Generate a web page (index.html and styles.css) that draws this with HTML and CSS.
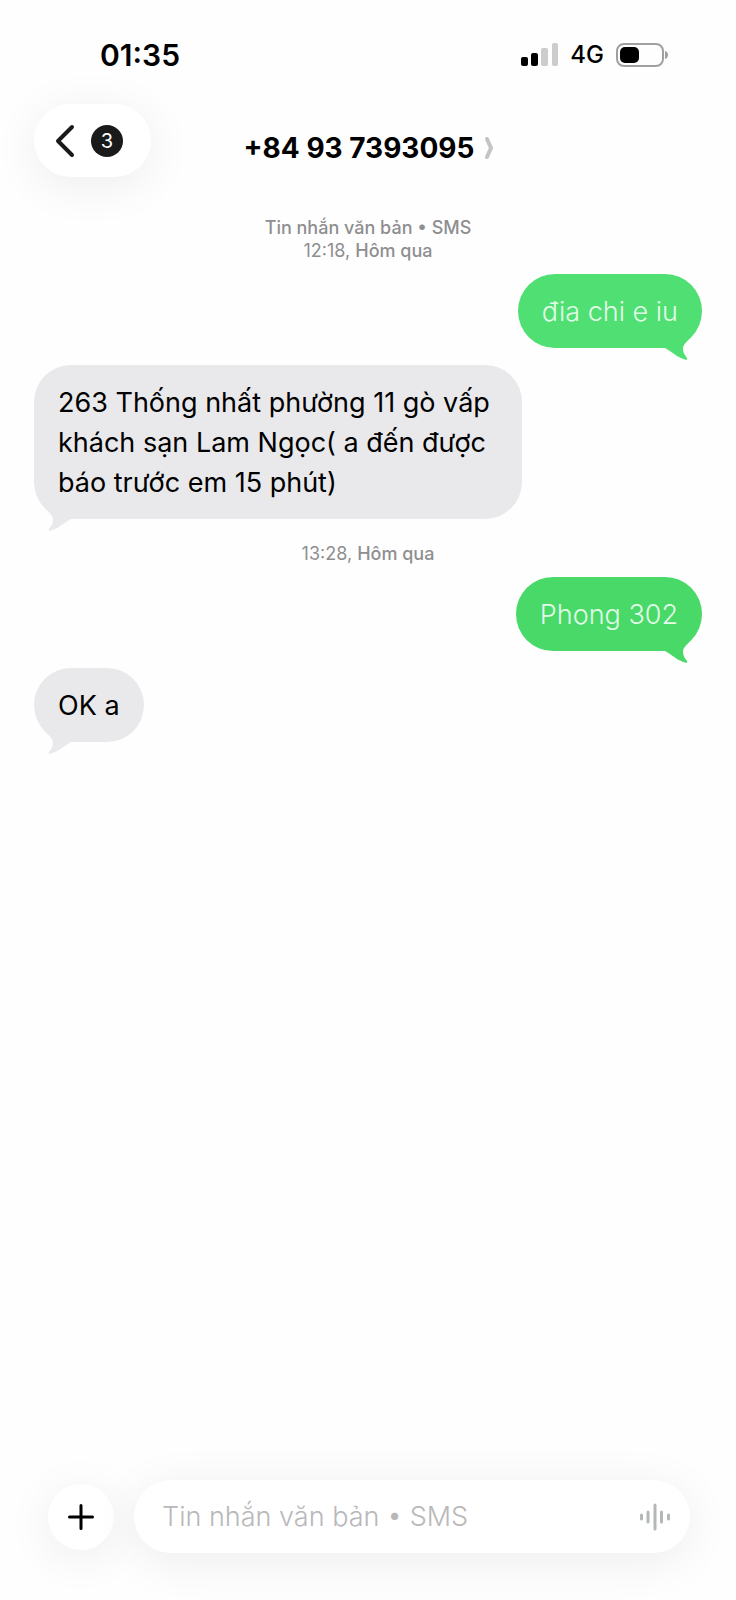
FILE: index.html
```html
<!DOCTYPE html>
<html lang="vi">
<head>
    <meta charset="UTF-8">
    <meta name="viewport" content="width=device-width, initial-scale=1.0">
    <title>Tin nhắn</title>
    <link rel="stylesheet" href="styles.css">
</head>
<body>
    <!-- tail shared by all bubbles -->
    <svg class="defs" width="0" height="0" aria-hidden="true">
        <symbol id="tail" viewBox="0 0 30 22">
            <path d="M0 0H28C25 4 21 6 21 11C21 15 23 17 25 20C26 21.500 25 22 23 21.500C15 19.500 10 13.500 3 10H0Z"/>
        </symbol>
    </svg>

    <div class="status-bar">
        <span class="time">01:35</span>
        <div class="status-icons">
            <svg width="37" height="24" viewBox="0 0 37 24" aria-hidden="true">
                <rect x="0" y="14" width="7" height="9" rx="2"/>
                <rect x="10" y="10" width="7" height="13" rx="2"/>
                <rect x="20" y="5" width="7" height="18" rx="2" fill="#cccccc"/>
                <rect x="31" y="0" width="6" height="23" rx="2" fill="#cccccc"/>
            </svg>
            <span class="network">4G</span>
            <svg width="53" height="24" viewBox="0 0 53 24" aria-hidden="true">
                <rect x="1" y="1" width="46" height="22" rx="7" fill="none" stroke="#a0a0a0" stroke-width="2"/>
                <rect x="4" y="4" width="19" height="16" rx="5"/>
                <path d="M49 8C53 9 53 15 49 16Z" fill="#a0a0a0"/>
            </svg>
        </div>
    </div>

    <header class="header">
        <button class="back" type="button" aria-label="Quay lại">
            <svg width="20" height="34" viewBox="0 0 20 34" aria-hidden="true">
                <path d="M17 3L3 17L17 31" fill="none" stroke="#1a1a1a" stroke-width="4" stroke-linecap="round" stroke-linejoin="round"/>
            </svg>
            <span class="badge">3</span>
        </button>
        <h1 class="contact">
            +84 93 7393095
            <svg width="10" height="22" viewBox="0 0 10 22" aria-hidden="true">
                <path d="M3 2L7 11L3 20" fill="none" stroke="#c4c4c6" stroke-width="4" stroke-linecap="round" stroke-linejoin="round"/>
            </svg>
        </h1>
    </header>

    <main class="thread">
        <p class="meta"><b>Tin nhắn văn bản • SMS</b><br>12:18, <b>Hôm qua</b></p>
        <div class="bubble sent">đia chi e iu<svg class="tail"><use href="#tail"/></svg></div>
        <div class="bubble received">263 Thống nhất phường 11 gò vấp khách sạn Lam Ngọc( a đến được báo trước em 15 phút)<svg class="tail"><use href="#tail"/></svg></div>
        <p class="meta">13:28, <b>Hôm qua</b></p>
        <div class="bubble sent later">Phong 302<svg class="tail"><use href="#tail"/></svg></div>
        <div class="bubble received">OK a<svg class="tail"><use href="#tail"/></svg></div>
    </main>

    <form class="composer">
        <button class="add" type="button" aria-label="Thêm">
            <svg width="26" height="26" viewBox="0 0 26 26" aria-hidden="true">
                <path d="M13 1.500V24.500M1.500 13H24.500" stroke="#000" stroke-width="3" stroke-linecap="round"/>
            </svg>
        </button>
        <div class="field">
            <input type="text" aria-label="Tin nhắn" placeholder="Tin nhắn văn bản • SMS">
            <button class="voice" type="button" aria-label="Ghi âm">
                <svg width="30" height="28" viewBox="0 0 30 28" aria-hidden="true">
                    <path d="M1.500 12V16M8 9V19M15 2V26M21.500 9V19M28.500 12V16" stroke="#b4b7b7" stroke-width="3" stroke-linecap="round"/>
                </svg>
            </button>
        </div>
    </form>
</body>
</html>
```
FILE: styles.css
```css
* {
    box-sizing: border-box;
}

body {
    margin: 0;
    min-height: 100vh;
    display: flex;
    flex-direction: column;
    background-color: #fefefe;
    color: #000;
    font-family: Inter, 'Liberation Sans', sans-serif;
    overflow-x: hidden;
}

button {
    border: none;
    padding: 0;
    background: none;
    font-family: inherit;
    cursor: pointer;
}

svg {
    display: block;
    flex-shrink: 0;
}

.defs {
    position: absolute;
}

/* status bar */
.status-bar {
    display: flex;
    justify-content: space-between;
    align-items: center;
    padding: 37px 67px 31px 100px;
}

.time {
    font-size: 30px;
    line-height: 36px;
    font-weight: 600;
}

.status-icons {
    display: flex;
    align-items: center;
    gap: 12px;
}

.network {
    font-size: 24px;
    line-height: 36px;
    font-weight: 500;
}

/* header */
.header {
    display: grid;
    grid-template-columns: 1fr auto 1fr;
    min-height: 88px;
    padding: 0 32px 0 34px;
}

.back {
    display: flex;
    align-items: center;
    justify-self: start;
    gap: 16px;
    height: 73px;
    padding: 0 28px 0 21px;
    border-radius: 37px;
    background-color: #fff;
    box-shadow: 0 8px 48px rgba(0, 0, 0, 0.07);
}

.badge {
    width: 32px;
    height: 32px;
    border-radius: 50%;
    background-color: #1a1a1a;
    color: #fff;
    font-size: 20px;
    line-height: 32px;
    text-align: center;
}

.contact {
    display: flex;
    align-items: center;
    gap: 10px;
    margin: 0;
    font-size: 28px;
    font-weight: 700;
}

/* messages */
.thread {
    flex: 1;
    display: flex;
    flex-direction: column;
    align-items: flex-start;
    padding: 24px 34px;
}

.meta {
    align-self: center;
    margin: 0 0 12px;
    color: #8e8e90;
    font-size: 18px;
    line-height: 23px;
    text-align: center;
}

.meta b {
    font-weight: 500;
}

.bubble {
    position: relative;
    max-width: 73%;
    margin-bottom: 17px;
    padding: 18px 24px 16px;
    border-radius: 37px;
    font-size: 27px;
    line-height: 40px;
}

.bubble + .meta {
    margin-top: 6px;
}

.sent {
    align-self: flex-end;
    background-color: #4fdf72;
    color: #e2fce8;
    fill: #4fdf72;
    font-weight: 300;
}

.sent.later {
    background-color: #48d969;
    fill: #48d969;
}

.received {
    background-color: #e9e9eb;
    fill: #e9e9eb;
}

.tail {
    position: absolute;
    right: 10px;
    bottom: -12px;
    width: 30px;
    height: 22px;
}

.received .tail {
    right: auto;
    left: 10px;
    transform: scaleX(-1);
}

/* composer */
.composer {
    display: flex;
    align-items: center;
    gap: 20px;
    padding: 0 46px 47px 48px;
}

.add {
    display: flex;
    align-items: center;
    justify-content: center;
    flex-shrink: 0;
    width: 66px;
    height: 66px;
    border-radius: 50%;
    background-color: #fff;
    box-shadow: 0 8px 48px rgba(0, 0, 0, 0.07);
}

.field {
    flex: 1;
    display: flex;
    align-items: center;
    height: 73px;
    padding: 0 20px 0 28px;
    border-radius: 37px;
    background-color: #fff;
    box-shadow: 0 8px 48px rgba(0, 0, 0, 0.07);
}

.field input {
    flex: 1;
    min-width: 0;
    padding: 0;
    border: none;
    outline: none;
    background: none;
    font-family: inherit;
    font-size: 27px;
    line-height: 40px;
}

.field input::placeholder {
    color: #b8b8ba;
    font-weight: 300;
    opacity: 1;
}
```
